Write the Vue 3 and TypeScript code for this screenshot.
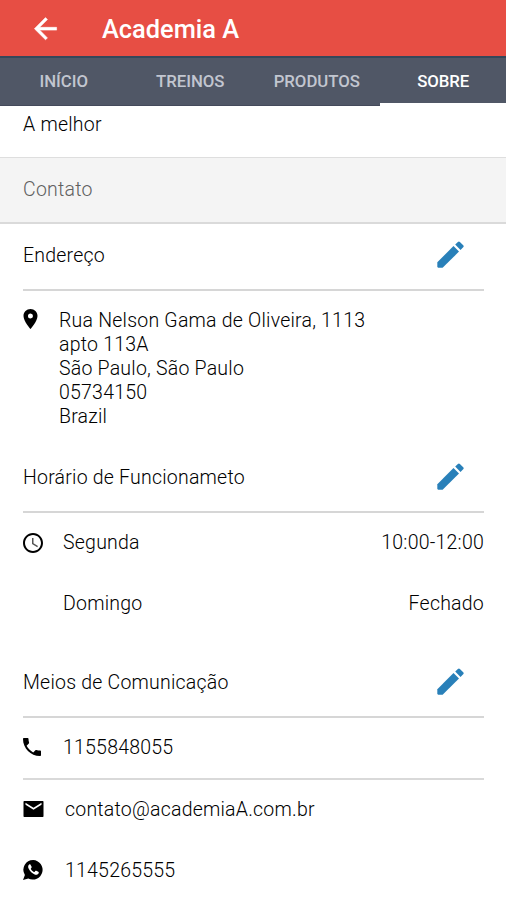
<script setup lang="ts">
interface Tab { label: string; active?: boolean }
interface Hours { day: string; time: string }

const tabs: Tab[] = [
  { label: 'INÍCIO' },
  { label: 'TREINOS' },
  { label: 'PRODUTOS' },
  { label: 'SOBRE', active: true },
]
const address: string[] = [
  'Rua Nelson Gama de Oliveira, 1113',
  'apto 113A',
  'São Paulo, São Paulo',
  '05734150',
  'Brazil',
]
const hours: Hours[] = [
  { day: 'Segunda', time: '10:00-12:00' },
  { day: 'Domingo', time: 'Fechado' },
]
const pencilBody = 'M.3 21.300 16.500 5.100l5.500 5.500L5.600 26.800H1.200L.3 25.900z'
const pencilCap = 'M18.200 3.600 20.900.900q1-1 2 0l3.300 3.300q1 1 0 2L23.500 8.900z'
</script>

<template>
  <div class="screen">
    <header class="app-bar">
      <svg class="back" viewBox="0 0 24 24"><path d="M20 11H7.83l5.59-5.59L12 4l-8 8 8 8 1.41-1.41L7.83 13H20v-2z" /></svg>
      <h1>Academia A</h1>
    </header>
    <nav class="tabs">
      <div v-for="tab in tabs" :key="tab.label" class="tab" :class="{ active: tab.active }">
        <span>{{ tab.label }}</span>
      </div>
    </nav>

    <p class="about">A melhor</p>
    <h2 class="band">Contato</h2>

    <section class="address-section">
      <div class="heading">
        <h3>Endereço</h3>
        <svg class="pencil" viewBox="0 0 27 27"><path :d="pencilBody" /><path :d="pencilCap" /></svg>
      </div>
      <div class="address">
        <svg class="pin" viewBox="5 2 14 20"><path fill-rule="evenodd" d="M12 2C8.13 2 5 5.13 5 9c0 5.25 7 13 7 13s7-7.75 7-13c0-3.87-3.13-7-7-7zm0 9.5a2.5 2.5 0 1 1 0-5 2.5 2.5 0 0 1 0 5z" /></svg>
        <div class="lines">
          <div v-for="line in address" :key="line">{{ line }}</div>
        </div>
      </div>
    </section>

    <section class="hours-section">
      <div class="heading">
        <h3>Horário de Funcionameto</h3>
        <svg class="pencil" viewBox="0 0 27 27"><path :d="pencilBody" /><path :d="pencilCap" /></svg>
      </div>
      <div v-for="(row, i) in hours" :key="row.day" class="row hours">
        <span class="icon-slot">
          <svg v-if="i === 0" class="clock" viewBox="2 2 20 20"><path d="M11.99 2C6.47 2 2 6.48 2 12s4.47 10 9.99 10C17.52 22 22 17.52 22 12S17.52 2 11.99 2zM12 20c-4.42 0-8-3.58-8-8s3.58-8 8-8 8 3.58 8 8-3.58 8-8 8z" /><path class="hands" d="M12.5 7H11v6l5.25 3.15.75-1.23-4.5-2.67z" /></svg>
        </span>
        <span>{{ row.day }}</span>
        <span class="time">{{ row.time }}</span>
      </div>
    </section>

    <section>
      <div class="heading">
        <h3>Meios de Comunicação</h3>
        <svg class="pencil" viewBox="0 0 27 27"><path :d="pencilBody" /><path :d="pencilCap" /></svg>
      </div>
      <div class="row phone">
        <span class="icon-slot">
          <svg class="handset" viewBox="3 3 18 18"><path d="M6.62 10.79c1.44 2.83 3.76 5.14 6.59 6.59l2.2-2.2c.27-.27.67-.36 1.02-.24 1.12.37 2.33.57 3.57.57.55 0 1 .45 1 1V20c0 .55-.45 1-1 1-9.39 0-17-7.61-17-17 0-.55.45-1 1-1h3.5c.55 0 1 .45 1 1 0 1.25.2 2.45.57 3.57.11.35.03.74-.25 1.02l-2.2 2.2z" /></svg>
        </span>
        <span>1155848055</span>
      </div>
      <div class="row mail">
        <span class="icon-slot">
          <svg class="envelope" viewBox="2 4 20 16"><path d="M21.300 4H2.700C2.300 4 2 4.300 2 4.700V19.300C2 19.700 2.300 20 2.700 20h18.600c.4 0 .7-.3.7-.7V4.700C22 4.300 21.700 4 21.300 4zM20 7.800l-8 5-8-5V5.800l8 5 8-5v2z" /></svg>
        </span>
        <span>contato@academiaA.com.br</span>
      </div>
      <div class="row whats">
        <span class="icon-slot">
          <svg class="whatsapp" viewBox="0 0 20 20"><path d="M10.200 0A9.800 9.800 0 0 0 1.900 15L0 20l5.300-1.500A9.800 9.800 0 1 0 10.200 0z" /><path class="call" d="M7.500 4.700c-.3-.5-.8-.5-1.300-.1-1.200 1-1.300 2.500-.6 4 1.400 2.900 3.500 5 6.500 6.100 1.500.5 3.300-.2 3.600-1.600.2-.7.100-1-.4-1.300l-2-1c-.5-.2-.8-.1-1.100.3l-.7.8c-.2.200-.4.200-.7.100-1.300-.7-2.200-1.600-2.900-2.900-.2-.3-.1-.5.200-.8.700-.8.700-1 .4-1.700z" /></svg>
        </span>
        <span>1145265555</span>
      </div>
    </section>
  </div>
</template>

<style>
body {
  margin: 0;
  background: #fff;
}
</style>

<style scoped>
.screen {
  box-sizing: border-box;
  width: 100%;
  height: 900px;
  overflow: hidden;
  background: #fff;
  color: #000;
  font: 300 19.5px/24px Roboto, sans-serif;
  letter-spacing: 0.22px;
}
h1, h2, h3, p {
  margin: 0;
  font-size: inherit;
  font-weight: inherit;
}
svg {
  display: block;
  flex: none;
  fill: #000;
}
.app-bar {
  box-sizing: border-box;
  display: flex;
  align-items: center;
  height: 56px;
  padding-left: 34px;
  background: #e74e44;
}
.back {
  width: 23px;
  height: 23px;
  padding-top: 1px;
  transform: scale(1.45);
  transform-origin: center;
  fill: #fff;
}
.back path {
  stroke: #fff;
  stroke-width: 0.4;
}
.app-bar h1 {
  margin-left: 45px;
  padding-top: 2px;
  color: #fff;
  font-size: 25.4px;
  font-weight: 500;
  letter-spacing: 0;
}
.tabs {
  box-sizing: border-box;
  display: grid;
  grid-template-columns: repeat(4, 1fr);
  height: 50px;
  border-top: 2px solid #35475a;
  background: #505766;
}
.tab {
  box-sizing: border-box;
  display: flex;
  align-items: center;
  justify-content: center;
  padding: 0 0 1px 1px;
  border-bottom: 1px solid #444a5b;
  color: #c2c6d0;
  font-size: 16.8px;
  font-weight: 500;
  letter-spacing: -0.05px;
}
.tab.active {
  border-bottom: 3px solid #fff;
  padding-top: 1px;
  padding-bottom: 0;
  color: #fff;
}
.about {
  height: 44px;
  padding: 7px 23px 0;
}
.band {
  box-sizing: border-box;
  height: 67px;
  padding: 20px 23px 0;
  border-top: 1px solid #dedede;
  border-bottom: 2px solid #dadada;
  background: #f4f4f4;
  color: #606060;
}
.heading {
  box-sizing: border-box;
  display: flex;
  align-items: center;
  justify-content: space-between;
  height: 67px;
  margin: 0 22px 0 23px;
  padding: 0 20px 2px 0;
  border-bottom: 2px solid #d6d6d6;
}
.address-section {
  height: 222px;
}
.hours-section {
  height: 205px;
}
.pencil {
  width: 27px;
  height: 27px;
  margin-bottom: 2px;
  fill: #2980b9;
}
.address {
  display: flex;
  padding: 18px 22px 0 23px;
}
.pin {
  width: 15px;
  height: 20px;
}
.lines {
  margin-left: 21px;
}
.row {
  box-sizing: border-box;
  display: flex;
  align-items: center;
  height: 61px;
  margin: 0 22px 0 23px;
}
.hours {
  padding-bottom: 2px;
}
.icon-slot {
  flex: none;
  width: 40px;
}
.clock {
  width: 20px;
  height: 20px;
}
.clock .hands {
  fill: #555;
}
.time {
  margin-left: auto;
}
.handset {
  width: 18px;
  height: 18px;
  margin-bottom: 2px;
}
.phone {
  height: 62px;
  border-bottom: 2px solid #d9d9d9;
}
.mail .icon-slot,
.whats .icon-slot {
  width: 42px;
}
.mail {
  height: 60px;
}
.envelope {
  width: 21px;
  height: 16px;
  margin-bottom: 2px;
}
.whatsapp {
  width: 20px;
  height: 20px;
  margin-bottom: 2px;
}
.call {
  fill: #fff;
}
</style>
